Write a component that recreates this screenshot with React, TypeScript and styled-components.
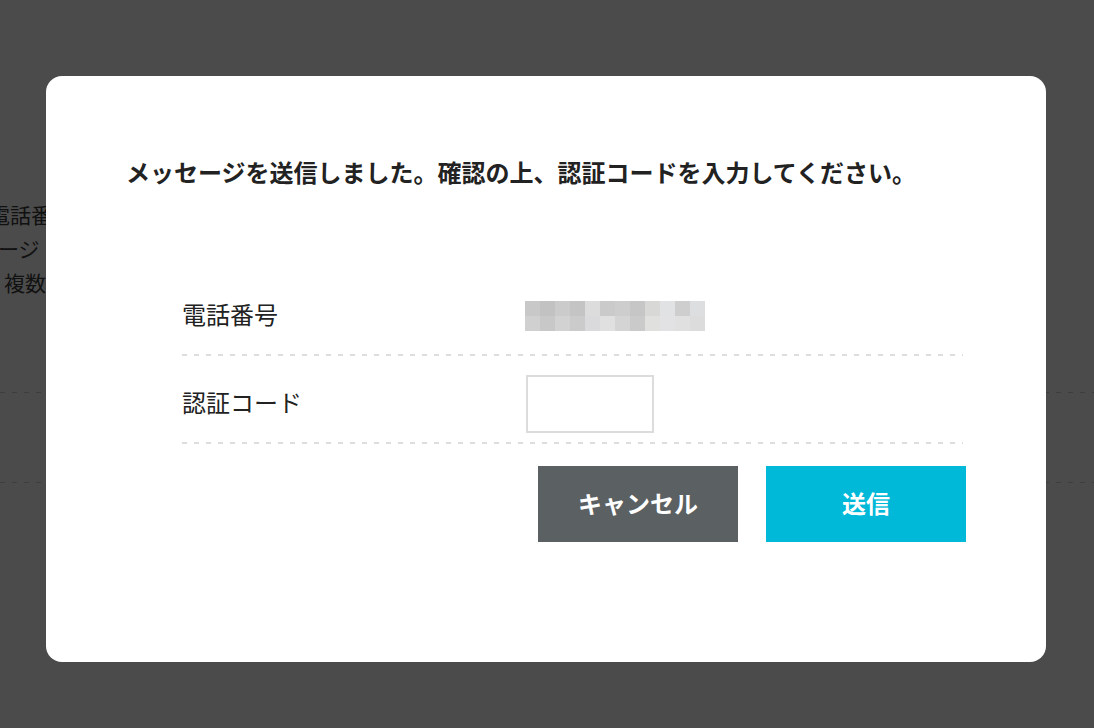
import React from "react";
import styled, { createGlobalStyle } from "styled-components";

const GlobalStyle = createGlobalStyle`
  html, body {
    margin: 0;
    padding: 0;
    background: #ffffff;
    overflow: hidden;
  }
  body {
    font-family: "Noto Sans CJK JP", "Noto Sans", sans-serif;
    color: #222222;
  }
  * { box-sizing: border-box; }
`;

const BgPage = styled.div`
  width: 1094px;
  height: 728px;
  padding-top: 197px;
  display: flex;
  flex-direction: column;
  overflow: hidden;
`;

const BgLine = styled.div<{ $indent: number }>`
  margin-left: ${(p) => p.$indent}px;
  font-size: 21px;
  line-height: 34px;
  color: #3a3a3a;
  white-space: nowrap;
`;

const BgRule = styled.div<{ $top: number }>`
  margin-top: ${(p) => p.$top}px;
  height: 1px;
  width: 100%;
  background-image: repeating-linear-gradient(
    to right,
    #d4d4d4 0 5px,
    transparent 5px 12px
  );
`;

const Overlay = styled.div`
  position: fixed;
  inset: 0;
  background: rgba(0, 0, 0, 0.706);
  display: flex;
  align-items: flex-start;
  padding: 76px 0 0 46px;
`;

const Modal = styled.div`
  width: 1000px;
  height: 586px;
  background: #ffffff;
  border-radius: 16px;
  padding: 78px 0 0 80px;
  display: flex;
  flex-direction: column;
`;

const Title = styled.h2`
  margin: 0;
  font-size: 24px;
  line-height: 36px;
  font-weight: 700;
  color: #222222;
  white-space: nowrap;
`;

const Table = styled.div`
  margin: 79px 0 0 56px;
  width: 781px;
  display: flex;
  flex-direction: column;
`;

const Row = styled.div`
  height: 88px;
  padding-top: 6px;
  display: grid;
  grid-template-columns: 343px 1fr;
  align-items: center;
  border-bottom: 1px solid transparent;
  background-image: repeating-linear-gradient(
    to right,
    #dedede 0 5px,
    transparent 5px 12px
  );
  background-size: 100% 2px;
  background-position: left bottom;
  background-repeat: no-repeat;
`;

const Label = styled.div`
  margin-top: -3px;
  font-size: 24px;
  line-height: 34px;
  color: #222222;
`;

const Mosaic = styled.div`
  display: grid;
  grid-template-columns: repeat(12, 15px);
  grid-auto-rows: 15px;
  width: 180px;
`;

const Cell = styled.span`
  display: block;
`;

const CodeInput = styled.input`
  display: block;
  width: 128px;
  height: 58px;
  margin-left: 1px;
  border: 2px solid #dcdcdc;
  border-radius: 0;
  background: #ffffff;
  outline: none;
  font-size: 22px;
  padding: 0 10px;
`;

const ButtonRow = styled.div`
  width: 784px;
  margin: 21px 0 0 56px;
  display: flex;
  justify-content: flex-end;
  gap: 28px;
`;

const Button = styled.button<{ $variant: "cancel" | "primary" }>`
  width: 200px;
  height: 76px;
  border: none;
  border-radius: 0;
  padding: 0 0 4px;
  background: ${(p) => (p.$variant === "primary" ? "#00b9d9" : "#5b6062")};
  color: #ffffff;
  font-family: "Noto Sans CJK JP", "Noto Sans", sans-serif;
  font-size: 24px;
  font-weight: 700;
  cursor: pointer;
`;

const mosaicColors = [
  "#c8c8c8", "#c2c2c2", "#cbcbcb", "#c4c4c4", "#dcdcdc", "#cacaca",
  "#cdcdcd", "#c6c6c6", "#d8d8d6", "#e0e2e4", "#cecece", "#dcdee0",
  "#d0d0d0", "#c8c8c8", "#d2d2d2", "#cbcbcb", "#dadadc", "#e0e0e0",
  "#d4d4d4", "#cacaca", "#e0e0de", "#e2e2e4", "#e0e0e0", "#dcdcdc",
];

export default function App() {
  return (
    <>
      <GlobalStyle />
      <BgPage>
        <BgLine $indent={-11}>電話番号</BgLine>
        <BgLine $indent={-65}>メッセージ</BgLine>
        <BgLine $indent={4}>複数の端末をご利用の場合</BgLine>
        <BgRule $top={93} />
        <BgRule $top={89} />
      </BgPage>
      <Overlay>
        <Modal>
          <Title>メッセージを送信しました。確認の上、認証コードを入力してください。</Title>
          <Table>
            <Row>
              <Label>電話番号</Label>
              <Mosaic aria-label="電話番号（非表示）">
                {mosaicColors.map((c, i) => (
                  <Cell key={i} style={{ background: c }} />
                ))}
              </Mosaic>
            </Row>
            <Row>
              <Label>認証コード</Label>
              <div>
                <CodeInput type="text" aria-label="認証コード" />
              </div>
            </Row>
          </Table>
          <ButtonRow>
            <Button $variant="cancel">キャンセル</Button>
            <Button $variant="primary">送信</Button>
          </ButtonRow>
        </Modal>
      </Overlay>
    </>
  );
}
